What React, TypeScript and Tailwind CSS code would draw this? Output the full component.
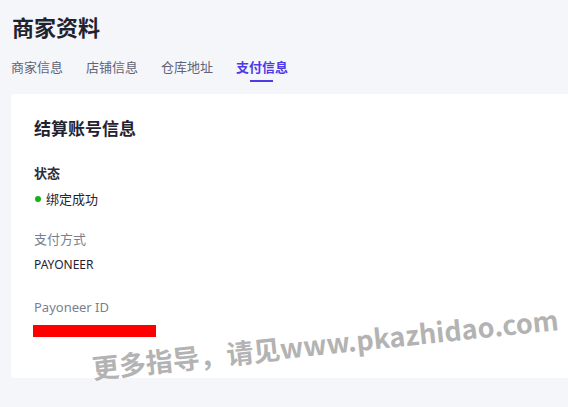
export default function App() {
  const font = { fontFamily: '"Noto Sans", "Noto Sans CJK SC", sans-serif' };
  return (
    <div className="relative w-[568px] h-[407px] overflow-hidden bg-[#f5f6fa]" style={font}>
      <div className="pl-[12px] pt-[11px]">
        <h1 className="text-[22px] leading-[32px] font-bold text-[#1f2330]">商家资料</h1>
      </div>
      <div className="flex pl-[11px] mt-[14px] gap-[23px] text-[13px] leading-[20px]">
        <span className="text-[#5f6476]">商家信息</span>
        <span className="text-[#5f6476]">店铺信息</span>
        <span className="text-[#5f6476]">仓库地址</span>
        <span className="relative font-bold text-[#4f3ae8]">
          支付信息
          <span className="absolute left-[14px] top-[23px] w-[23px] h-[2px] bg-[#4f3ae8]" />
        </span>
      </div>
      <div className="ml-[11px] mt-[17px] h-[284px] bg-white rounded-l-[4px] pl-[23px] pt-[22px]">
        <h2 className="text-[17px] leading-[26px] font-bold text-[#1f2330]">结算账号信息</h2>
        <div className="mt-[21px] text-[13px] leading-[20px] font-bold text-[#2a2e3a]">状态</div>
        <div className="mt-[6px] flex items-center text-[13px] leading-[20px] text-[#1f2330]">
          <span className="ml-[1px] w-[6px] h-[6px] rounded-full bg-[#16b316]" />
          <span className="ml-[5px]">绑定成功</span>
        </div>
        <div className="mt-[20px] text-[13px] leading-[20px] text-[#7a7f8f]">支付方式</div>
        <div className="mt-[6px] text-[12px] leading-[20px] text-[#1f2330]">PAYONEER</div>
        <div className="mt-[22px] text-[13px] leading-[20px] text-[#7a7f8f]">Payoneer ID</div>
        <div className="mt-[8px] -ml-[1px] w-[123px] h-[12px] bg-[#ff0000]" />
      </div>
      <div className="absolute left-[92px] top-[352px] origin-left -rotate-[6deg] whitespace-nowrap text-[27px] leading-[32px] font-bold text-[#b3b3b3]" style={{ fontFamily: '"Noto Sans CJK SC", "Noto Sans", sans-serif' }}>
        更多指导，请见www.pkazhidao.com
      </div>
    </div>
  );
}
